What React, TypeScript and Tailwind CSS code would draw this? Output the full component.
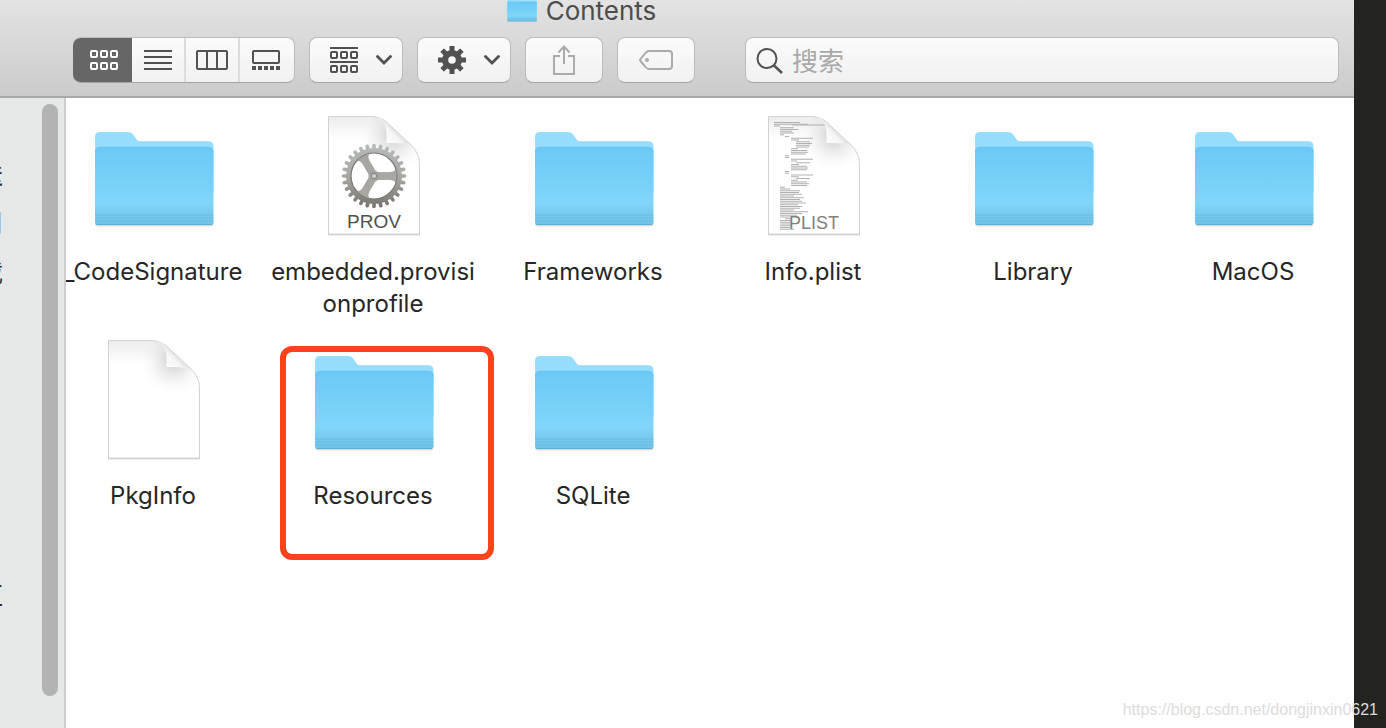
import { useId } from "react";
import type { ReactNode } from "react";

type Kind = "folder" | "prov" | "plist" | "blank";

interface Entry {
  name: string;
  kind: Kind;
  marked?: boolean;
}

const entries: Entry[] = [
  { name: "_CodeSignature", kind: "folder" },
  { name: "embedded.provisionprofile", kind: "prov" },
  { name: "Frameworks", kind: "folder" },
  { name: "Info.plist", kind: "plist" },
  { name: "Library", kind: "folder" },
  { name: "MacOS", kind: "folder" },
  { name: "PkgInfo", kind: "blank" },
  { name: "Resources", kind: "folder", marked: true },
  { name: "SQLite", kind: "folder" },
];

// indent and length of each line in the plist thumbnail
const plistLines = [
  [6, 26], [6, 34], [6, 6], [12, 14], [12, 18], [12, 12], [12, 14], [12, 4],
  [17, 4], [23, 22], [23, 8], [28, 14], [28, 16], [28, 14], [28, 13], [23, 7],
  [23, 16], [23, 17], [23, 15], [17, 4], [17, 4], [23, 22], [23, 6], [28, 14],
  [23, 8], [23, 16], [23, 17], [23, 16], [17, 4], [17, 4], [23, 22], [23, 8],
  [28, 14], [23, 7], [23, 16], [23, 18], [23, 16], [12, 5], [12, 10], [12, 20],
  [12, 19], [12, 22], [12, 14], [12, 24], [12, 20], [12, 22], [12, 26],
  [12, 18], [12, 22], [12, 20], [12, 14], [12, 28], [12, 22], [12, 17],
  [12, 10], [17, 6], [12, 12], [12, 11], [12, 12], [12, 12], [12, 10], [12, 14],
];

function FolderIcon({ className }: { className: string }) {
  const id = useId();
  return (
    <svg viewBox="0 0 128 128" className={className} aria-hidden="true">
      <defs>
        <linearGradient id={id} x1="0" y1="0" x2="0" y2="1">
          <stop offset="0" stopColor="#6ac9f5" />
          <stop offset="0.72" stopColor="#80d5fa" />
          <stop offset="0.86" stopColor="#78caef" />
          <stop offset="1" stopColor="#6fc3e9" />
        </linearGradient>
      </defs>
      <path d="M5 109h118.500v2.500q0 3-3 3H8q-3 0-3-3z" fill="#000" opacity="0.14" />
      <path d="M5 25q0-5 5-5h28q3.500 0 5.500 3l3 4.500q1 1.700 3 1.700h68.500q5.500 0 5.500 5V80H5z" fill="#96dcfd" />
      <path d="M5 40q0-5 5-5h108.500q5 0 5 5v70q0 3-3 3H8q-3 0-3-3z" fill={`url(#${id})`} />
      <path d="M5.500 40q0-4.700 5-4.700H118q5 0 5 4.700" fill="none" stroke="#67c4ee" strokeWidth="0.800" />
      <path d="M5 103h118.500M5 106h118.500M5 109h118.500" stroke="#66badf" strokeWidth="0.900" />
      <path d="M6.500 112.500h115.500" stroke="#5dadd2" strokeWidth="1" />
    </svg>
  );
}

function GearArt() {
  const id = useId();
  const teeth = Array.from({ length: 28 }, (_, i) => (i * 360) / 28);
  return (
    <g>
      <defs>
        <linearGradient id={id} gradientUnits="userSpaceOnUse" x1="0" y1="-32" x2="0" y2="32">
          <stop offset="0" stopColor="#b4bbb7" />
          <stop offset="0.5" stopColor="#aaa8a4" />
          <stop offset="1" stopColor="#77726d" />
        </linearGradient>
      </defs>
      <g transform="translate(64 64)">
        <circle r="24" fill="#fff" />
        <g fill="none" stroke={`url(#${id})`}>
          <circle r="25.500" strokeWidth="5" />
          {teeth.map((a) => {
            const r = (a * Math.PI) / 180;
            return (
              <line
                key={a}
                x1={27 * Math.sin(r)}
                y1={-27 * Math.cos(r)}
                x2={30.5 * Math.sin(r)}
                y2={-30.5 * Math.cos(r)}
                strokeWidth="3.600"
                strokeLinecap="round"
              />
            );
          })}
        </g>
        <circle r="23" fill="none" stroke="#7b7874" strokeWidth="1.200" />
        {[0, 120, 240].map((a) => (
          <path
            key={a}
            d="M0-3.500H16q4 0 6.500-3.500V7Q20 3.500 16 3.500H0z"
            transform={`rotate(${a})`}
            fill="#a9a7a3"
            stroke="#85827e"
            strokeWidth="0.500"
          />
        ))}
        <circle r="5.500" fill="#a5a39f" />
        <circle r="2.600" fill="#cfcfcf" stroke="#74716d" strokeWidth="0.800" />
      </g>
    </g>
  );
}

function DocumentIcon({ kind }: { kind: Kind }) {
  const id = useId();
  return (
    <svg viewBox="0 0 128 128" className="size-32" aria-hidden="true">
      <defs>
        <linearGradient id={`${id}p`} x1="0" y1="0" x2="0" y2="1">
          <stop offset="0" stopColor="#ececec" />
          <stop offset="0.2" stopColor="#fff" />
        </linearGradient>
        <radialGradient id={`${id}s`} gradientUnits="userSpaceOnUse" cx="84" cy="25" r="36">
          <stop offset="0" stopColor="#999" stopOpacity="0.5" />
          <stop offset="0.45" stopColor="#bbb" stopOpacity="0.25" />
          <stop offset="1" stopColor="#fff" stopOpacity="0" />
        </radialGradient>
        <linearGradient id={`${id}c`} gradientUnits="userSpaceOnUse" x1="76" y1="32" x2="88" y2="20">
          <stop offset="0" stopColor="#fff" />
          <stop offset="0.7" stopColor="#f6f6f6" />
          <stop offset="1" stopColor="#dedede" />
        </linearGradient>
      </defs>
      <path d="M18 121h92v2.500H18z" fill="#000" opacity="0.16" />
      <path
        d="M18.500 4.500H60q10 0 16.500 5.500L100 32q9.500 8.500 9.500 20v70h-91z"
        fill={`url(#${id}p)`}
        stroke="#d2d2d2"
      />
      <path d="M19 5H60q10 0 16.500 5.500L99.500 32q9.500 8.500 9.500 20V75H19z" fill={`url(#${id}s)`} />
      {kind === "plist" && (
        <g fill="#b0b0b0">
          {plistLines.map(([x, w], i) => (
            <rect key={i} x={18 + x} y={10 + i * 1.75} width={w} height="1" />
          ))}
          <path d="M42 12.500h34v1H42z" />
        </g>
      )}
      <path d="M67 5.500q9.500 5 9.500 15V31q14-.5 23 1L76.500 10.500q-4-4-9.500-5z" fill={`url(#${id}c)`} />
      {kind === "prov" && <GearArt />}
      {kind === "prov" && (
        <text x="64" y="116" textAnchor="middle" fontSize="19" fill="#4f4f4f" className="font-['Liberation_Sans']">
          PROV
        </text>
      )}
      {kind === "plist" && (
        <text x="64" y="117" textAnchor="middle" fontSize="18" fill="#808080" className="font-['Liberation_Sans']">
          PLIST
        </text>
      )}
    </svg>
  );
}

function ToolButton({ label, className, children }: { label: string; className: string; children: ReactNode }) {
  return (
    <button
      type="button"
      aria-label={label}
      className={`flex h-[46px] shrink-0 items-center justify-center rounded-lg border border-[#bdbdbd] border-b-[#a3a3a3] bg-linear-to-b from-[#fbfbfb] to-[#f1f1f1] text-[#515151] ${className}`}
    >
      {children}
    </button>
  );
}

function Chevron() {
  return (
    <svg viewBox="0 0 16 10" className="h-[10px] w-4" fill="none" stroke="currentColor" strokeWidth="2.800">
      <path d="M1.500 1.500 8 8l6.500-6.500" strokeLinecap="round" />
    </svg>
  );
}

function SmallSquares({ y }: { y: number }) {
  return (
    <>
      {[1, 11, 21].map((x) => (
        <rect key={x} x={x} y={y} width="6" height="6" rx="1" />
      ))}
    </>
  );
}

function ViewSwitcher() {
  return (
    <div
      role="group"
      aria-label="View"
      className="flex h-[46px] w-[222px] shrink-0 overflow-hidden rounded-lg border border-l-0 border-[#bdbdbd] border-b-[#a3a3a3] bg-linear-to-b from-[#fbfbfb] to-[#f1f1f1] text-[#515151]"
    >
      <button type="button" aria-label="Icons" className="flex w-[59px] items-center justify-center bg-[#666] pl-[3px] text-white">
        <svg viewBox="0 0 28 20" className="h-5 w-7" fill="none" stroke="currentColor" strokeWidth="2">
          <SmallSquares y={1} />
          <SmallSquares y={13} />
        </svg>
      </button>
      <button type="button" aria-label="List" className="flex w-[52px] items-center justify-center">
        <svg viewBox="0 0 28 20" className="h-5 w-7" stroke="currentColor" strokeWidth="2">
          <path d="M0 1h28M0 7h28M0 13h28M0 19h28" />
        </svg>
      </button>
      <button type="button" aria-label="Columns" className="flex w-[54px] items-center justify-center border-l-2 border-[#dcdcdc]">
        <svg viewBox="0 0 32 20" className="h-5 w-8" fill="none" stroke="currentColor" strokeWidth="2">
          <rect x="1" y="1" width="30" height="18" rx="1" />
          <path d="M11 1v18M21 1v18" />
        </svg>
      </button>
      <button type="button" aria-label="Gallery" className="flex flex-1 items-center justify-center border-l-2 border-[#dcdcdc] pr-[3px]">
        <svg viewBox="0 0 28 20" className="h-5 w-7" fill="none" stroke="currentColor" strokeWidth="2">
          <rect x="1" y="1" width="26" height="12" rx="1" />
          <path d="M0 18h28" strokeWidth="4" strokeDasharray="4 2" />
        </svg>
      </button>
    </div>
  );
}

function Toolbar() {
  return (
    <header className="flex h-[98px] shrink-0 flex-col border-b-2 border-[#a9a9a9] bg-linear-to-b from-[#e3e3e3] to-[#cbcbcb]">
      <div className="flex h-[37px] items-start justify-center">
        <h1 className="-ml-48 flex h-[22px] items-center gap-2 text-[26px] leading-[22px] text-[#4d4d4d]">
          <FolderIcon className="-mt-1 size-8" />
          Contents
        </h1>
      </div>
      <div className="flex pr-[15px] pl-[73px]">
        <ViewSwitcher />
        <ToolButton label="Group" className="ml-[14px] w-[94px] gap-[18px] pl-[10px]">
          <svg viewBox="0 0 28 26" className="h-[26px] w-7" fill="none" stroke="currentColor" strokeWidth="2">
            <path d="M0 1h28M0 15h28" />
            <SmallSquares y={5} />
            <SmallSquares y={19} />
          </svg>
          <Chevron />
        </ToolButton>
        <ToolButton label="Action" className="ml-[14px] w-[94px] gap-[18px] pl-[10px]">
          <svg viewBox="-14 -14 28 28" className="size-7" fill="currentColor">
            {[0, 45, 90, 135].map((a) => (
              <rect key={a} x="-2.500" y="-14" width="5" height="28" rx="0.500" transform={`rotate(${a})`} />
            ))}
            <circle r="10" />
            <circle r="3.800" fill="#f7f7f7" />
          </svg>
          <Chevron />
        </ToolButton>
        <ToolButton label="Share" className="ml-[14px] w-[78px]">
          <svg viewBox="0 0 22 30" className="h-[30px] w-[22px]" fill="none" stroke="#ababab" strokeWidth="2">
            <path d="M7 11H1v18h20V11h-6M11 19V2M5.500 7.500 11 1.500l5.500 6" />
          </svg>
        </ToolButton>
        <ToolButton label="Tags" className="ml-[14px] w-[78px]">
          <svg viewBox="0 0 34 20" className="h-5 w-[34px]" fill="none" stroke="#ababab" strokeWidth="2">
            <path d="M10 1h20q3 0 3 3v12q0 3-3 3H10q-2 0-3.500-2L1.500 11q-.8-1 0-2l5-6Q8 1 10 1z" />
            <circle cx="8" cy="10" r="2" fill="#ababab" stroke="none" />
          </svg>
        </ToolButton>
        <label className="ml-[50px] flex h-[46px] min-w-0 flex-1 items-center gap-2 rounded-lg border border-[#bdbdbd] border-b-[#a3a3a3] bg-linear-to-b from-[#fbfbfb] to-[#f1f1f1] pt-[2px] pl-[10px]">
          <svg viewBox="0 0 28 28" className="size-7 shrink-0" fill="none" stroke="#515151" strokeWidth="2">
            <circle cx="11" cy="11.500" r="9.500" />
            <path d="m18 18.500 8 7.500" strokeWidth="2.500" />
          </svg>
          <input
            type="search"
            aria-label="搜索"
            placeholder="搜索"
            className="min-w-0 flex-1 bg-transparent pt-[2px] text-[26px] leading-8 outline-none placeholder:text-[#a9a9a9]"
          />
        </label>
      </div>
    </header>
  );
}

function Sidebar() {
  return (
    <aside className="flex w-[66px] shrink-0 justify-between border-r-2 border-[#cdcdcd] bg-[#e6e7e7] pr-[6px]">
      <ul className="flex w-[3px] flex-col items-end overflow-hidden pt-[52px] text-[26px] leading-[49px] whitespace-nowrap text-[#2a2a2a]">
        <li>隔空投送</li>
        <li>最近使用</li>
        <li>下载</li>
        <li className="mt-[274px]">红</li>
      </ul>
      <div className="mt-[6px] mb-8 w-4 rounded-full bg-[#b3b3b3]" />
    </aside>
  );
}

function FileItem({ entry }: { entry: Entry }) {
  return (
    <li className="relative flex h-56 flex-col items-center">
      {entry.kind === "folder" ? <FolderIcon className="size-32" /> : <DocumentIcon kind={entry.kind} />}
      <span className="mt-4 mr-[2px] max-w-52 text-center text-[24px] leading-8 break-all text-[#262626]">{entry.name}</span>
      {entry.marked && (
        <div className="absolute top-[10px] left-4 h-[214px] w-[214px] rounded-xl border-6 border-[#ff411c]" />
      )}
    </li>
  );
}

export default function App() {
  return (
    <div className="relative flex h-screen overflow-hidden bg-[#23241f] pr-8 font-['Inter','Noto_Sans_CJK_SC',sans-serif]">
      <div className="flex min-w-0 flex-1 flex-col bg-white">
        <Toolbar />
        <div className="flex min-h-0 flex-1">
          <Sidebar />
          <main className="min-w-0 flex-1 overflow-hidden">
            <ul className="-mr-[10px] -ml-[22px] grid grid-cols-6 pt-[14px]">
              {entries.map((e) => (
                <FileItem key={e.name} entry={e} />
              ))}
            </ul>
          </main>
        </div>
      </div>
      <p className="absolute right-2 bottom-[6px] font-['Liberation_Sans',sans-serif] text-base text-[#dcdcdc]">
        https://blog.csdn.net/dongjinxin0621
      </p>
    </div>
  );
}
